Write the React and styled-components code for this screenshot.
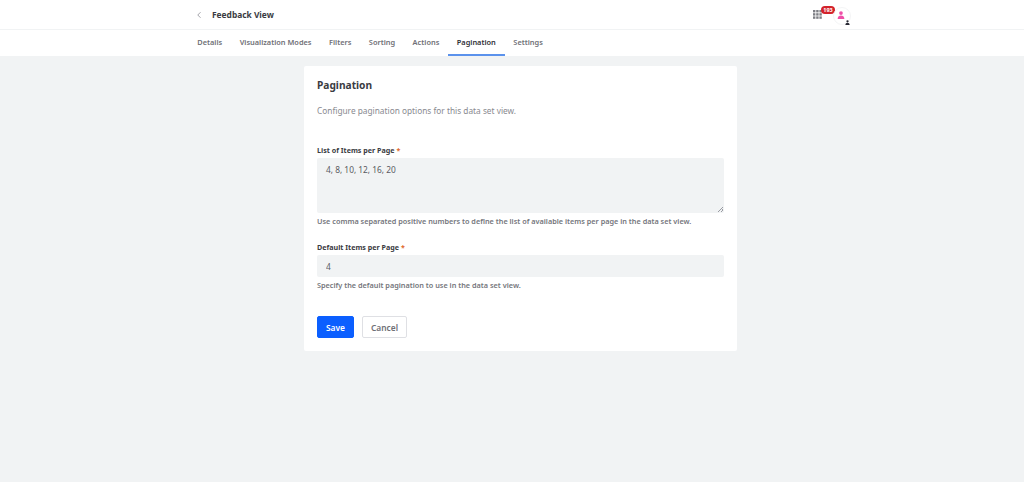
import React from 'react';
import styled, { createGlobalStyle } from 'styled-components';
import { ChevronLeft } from 'lucide-react';

const GlobalStyle = createGlobalStyle`
  html, body {
    margin: 0;
    padding: 0;
    height: 100%;
    background: #f1f3f4;
    font-family: "Noto Sans", "Open Sans", sans-serif;
    color: #272833;
  }
  * { box-sizing: border-box; }
`;

const Page = styled.div`
  width: 1024px;
  height: 482px;
  overflow: hidden;
  display: flex;
  flex-direction: column;
`;

const TopBar = styled.header`
  height: 30px;
  background: #fff;
  border-bottom: 1px solid #f1f3f4;
  display: flex;
  align-items: center;
  padding: 0 179px 0 194px;
`;

const BackButton = styled.span`
  display: flex;
  color: #6b6c75;
  margin-right: 8px;
`;

const PageTitle = styled.h1`
  margin: 0;
  font-size: 8.4px;
  font-weight: 700;
  color: #3a3b42;
  flex: 1;
`;

const AppsIcon = styled.span`
  position: relative;
  display: flex;
  margin-right: 15px;
`;

const Badge = styled.span`
  position: absolute;
  left: 8px;
  top: -4px;
  width: 14px;
  height: 8px;
  border-radius: 4px;
  background: #d3222a;
  color: #fff;
  font-size: 5.5px;
  font-weight: 700;
  line-height: 8px;
  text-align: center;
`;

const UserIcon = styled.span`
  position: relative;
  display: flex;

  &::before {
    content: '';
    position: absolute;
    left: -4px;
    top: -4px;
    width: 16px;
    height: 16px;
    border: 1px solid #f4f5f6;
    border-radius: 50%;
  }
`;

const SmallPerson = styled.span`
  position: absolute;
  left: 8px;
  top: 9px;
  display: flex;
`;

const TabBar = styled.nav`
  height: 26px;
  background: #fff;
  display: flex;
  padding-left: 188.5px;
`;

const Tab = styled.a`
  height: 26px;
  padding: 0 8.75px;
  display: flex;
  align-items: center;
  font-size: 7.4px;
  font-weight: 600;
  color: ${(p) => (p.$active ? '#2f3036' : '#6f7076')};
  border-bottom: 2px solid ${(p) => (p.$active ? '#5b92ec' : 'transparent')};
`;

const Main = styled.main`
  flex: 1;
  padding: 10px 0 0 304px;
  display: flex;
  align-items: flex-start;
`;

const Card = styled.section`
  width: 433px;
  height: 285px;
  background: #fff;
  border-radius: 2px;
  padding: 13px 13px 0;
`;

const CardTitle = styled.h2`
  margin: 0;
  font-size: 10.2px;
  line-height: 13px;
  font-weight: 700;
  color: #3a3b42;
`;

const Description = styled.p`
  margin: 13px 0 0;
  font-size: 8.3px;
  line-height: 12px;
  color: #898a90;
`;

const Field = styled.div`
  margin-top: ${(p) => p.$top}px;
`;

const Label = styled.label`
  display: block;
  font-size: 7.15px;
  line-height: 10px;
  font-weight: 700;
  color: #3a3b42;
  margin-bottom: 3px;
`;

const Required = styled.span`
  color: #e0672b;
`;

const TextArea = styled.textarea`
  display: block;
  width: 100%;
  height: 55px;
  border: 0;
  border-radius: 2px;
  background: #f1f3f4;
  padding: 6px 9px;
  font: 400 8.35px/12px "Noto Sans", sans-serif;
  color: #5a5b62;
  outline: none;

  &::-webkit-resizer {
    background: linear-gradient(135deg, transparent 40%, #9a9ca3 40%, #9a9ca3 55%, transparent 55%, transparent 70%, #9a9ca3 70%, #9a9ca3 85%, transparent 85%)
      no-repeat right 1px bottom 1px / 5px 5px;
  }
`;

const TextInput = styled.input`
  display: block;
  width: 100%;
  height: 22px;
  border: 0;
  border-radius: 2px;
  background: #f1f3f4;
  padding: 0 9px;
  font: 400 8.35px "Noto Sans", sans-serif;
  color: #5a5b62;
  outline: none;
`;

const Hint = styled.p`
  margin: 3px 0 0;
  font-size: 7.3px;
  line-height: 11px;
  font-weight: 600;
  color: #75767c;
`;

const Actions = styled.div`
  margin-top: 25px;
  display: flex;
  gap: 8px;
`;

const Button = styled.button`
  height: 22px;
  border-radius: 2px;
  font: 600 8.4px "Noto Sans", sans-serif;
  padding: 0;
  width: ${(p) => (p.$primary ? 37 : 45)}px;
  background: ${(p) => (p.$primary ? '#0b5fff' : '#fff')};
  color: ${(p) => (p.$primary ? '#fff' : '#6f7076')};
  border: 1px solid ${(p) => (p.$primary ? '#0b5fff' : '#dfe0e4')};
`;

const tabs = ['Details', 'Visualization Modes', 'Filters', 'Sorting', 'Actions', 'Pagination', 'Settings'];

const Apps = () => (
  <svg width="9" height="9" viewBox="0 0 9 9" fill="#7d7e84">
    {[0, 3.2, 6.4].flatMap((y) =>
      [0, 3.2, 6.4].map((x) => <rect key={`${x}-${y}`} x={x} y={y} width="2.4" height="2.4" />)
    )}
  </svg>
);

const Person = ({ size, color }) => (
  <svg width={size} height={size} viewBox="0 0 10 10" fill={color}>
    <circle cx="5" cy="2.6" r="2.3" />
    <path d="M0.8 10c0-3 1.8-4.4 4.2-4.4S9.2 7 9.2 10z" />
  </svg>
);

const App = () => {
  return (
    <Page>
      <GlobalStyle />
      <TopBar>
        <BackButton>
          <ChevronLeft size={10} strokeWidth={1.5} />
        </BackButton>
        <PageTitle>Feedback View</PageTitle>
        <AppsIcon>
          <Apps />
          <Badge>193</Badge>
        </AppsIcon>
        <UserIcon>
          <Person size={8} color="#ee4fa8" />
          <SmallPerson>
            <Person size={5} color="#272833" />
          </SmallPerson>
        </UserIcon>
      </TopBar>
      <TabBar>
        {tabs.map((name) => (
          <Tab key={name} $active={name === 'Pagination'}>
            {name}
          </Tab>
        ))}
      </TabBar>
      <Main>
        <Card>
          <CardTitle>Pagination</CardTitle>
          <Description>Configure pagination options for this data set view.</Description>
          <Field $top={28}>
            <Label>
              List of Items per Page <Required>*</Required>
            </Label>
            <TextArea defaultValue="4, 8, 10, 12, 16, 20" />
            <Hint>Use comma separated positive numbers to define the list of available items per page in the data set view.</Hint>
          </Field>
          <Field $top={15}>
            <Label>
              Default Items per Page <Required>*</Required>
            </Label>
            <TextInput defaultValue="4" />
            <Hint>Specify the default pagination to use in the data set view.</Hint>
          </Field>
          <Actions>
            <Button $primary>Save</Button>
            <Button>Cancel</Button>
          </Actions>
        </Card>
      </Main>
    </Page>
  );
};

export default App;
